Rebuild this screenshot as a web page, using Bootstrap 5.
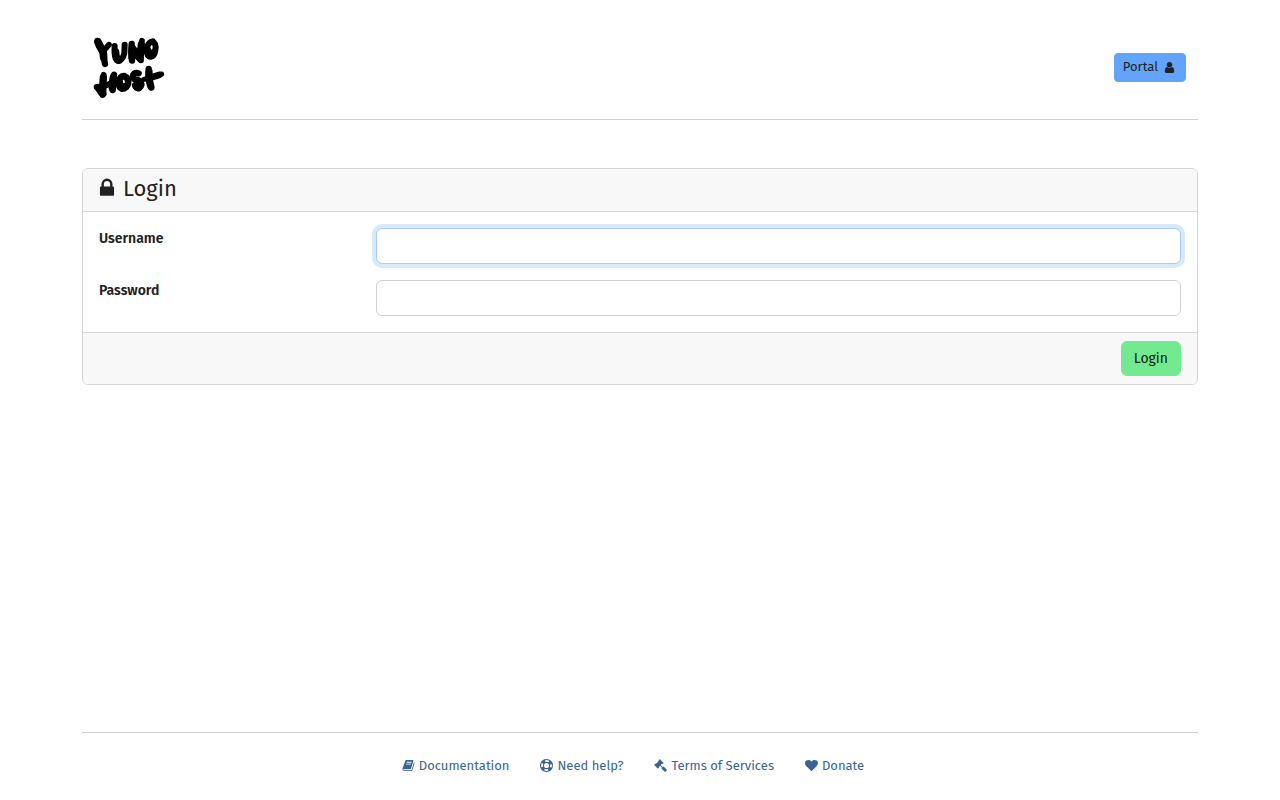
<!DOCTYPE html>
<html lang="en">
<head>
<meta charset="utf-8">
<meta name="viewport" content="width=device-width, initial-scale=1">
<title>YunoHost Portal</title>
<link href="https://cdn.jsdelivr.net/npm/bootstrap@5.3.0/dist/css/bootstrap.min.css" rel="stylesheet">
<style>
  body { font-family: "Fira Sans", "Noto Sans", sans-serif; font-size: 14px; line-height: 22px; color: #222; }
  .line { border-color: #d0d0d0 !important; }
  .fa { width: 1em; height: 1em; fill: currentColor; flex: none; }
  .site-header { padding: 32px 12px 16px; }
  .logo { width: 90px; height: 71px; margin-left: -10px; }
  .btn-portal { --bs-btn-bg: #62a4fb; --bs-btn-border-color: #62a4fb; --bs-btn-color: #222; --bs-btn-hover-bg: #4b96fa;
    font-size: 13px; line-height: 18px; padding: 4px 9px 5px 8px; border-radius: 4px; gap: 5px; }
  .btn-login { --bs-btn-bg: #72eb8e; --bs-btn-border-color: #72eb8e; --bs-btn-color: #0f1d13; --bs-btn-hover-bg: #5fdc7c;
    font-size: 14px; line-height: 21px; padding: 6px 12px; }
  .card { --bs-card-border-color: #d5d5d5; --bs-card-cap-bg: #f8f8f8; }
  .card-title { font-size: 22px; line-height: 24px; gap: 5px; padding-bottom: 2px; }
  .card-title .fa { margin: -2px 0 0 -3px; }
  .form-control { font-size: 14px; line-height: 22px; border-color: #d0d0d0; }
  .form-control.current, .form-control:focus { border-color: #a6cbfd; box-shadow: 0 0 0 4px #d8e8fe; }
  .col-form-label { font-size: 14px; line-height: 22px; padding-top: 0; padding-bottom: 0; font-weight: 600; }
  .foot-links { font-size: 13px; line-height: 20px; padding: 23px 14px 24px 0; column-gap: 31px; }
  .foot-links a { color: #3a6496; gap: 4px; }
  .foot-links .fa { margin-bottom: 1px; }
</style>
</head>
<body>
<svg class="d-none" xmlns="http://www.w3.org/2000/svg">
  <symbol id="user" viewBox="0 0 1792 1792"><path d="M1536 1399q0 109-62.5 187t-150.5 78h-854q-88 0-150.5-78t-62.5-187q0-85 8.5-160.5t31.5-152 58.5-131 94-89 134.5-34.5q131 128 313 128t313-128q76 0 134.5 34.5t94 89 58.5 131 31.5 152 8.5 160.5zm-256-887q0 159-112.5 271.5t-271.5 112.5-271.5-112.5-112.5-271.5 112.5-271.5 271.5-112.5 271.5 112.5 112.5 271.5z"/></symbol>
  <symbol id="lock" viewBox="0 0 1792 1792"><path d="M640 768h512v-192q0-106-75-181t-181-75-181 75-75 181v192zm832 96v576q0 40-28 68t-68 28h-960q-40 0-68-28t-28-68v-576q0-40 28-68t68-28h32v-192q0-184 132-316t316-132 316 132 132 316v192h32q40 0 68 28t28 68z"/></symbol>
  <symbol id="book" viewBox="0 0 1792 1792"><path d="M1703 478q40 57 18 129l-275 906q-19 64-76.5 107.5t-122.5 43.5h-923q-77 0-148.5-53.5t-99.5-131.5q-24-67-2-127 0-4 3-27t4-37q1-8-3-21.5t-3-19.5q2-11 8-21t16.5-23.5 16.5-23.5q23-38 45-91.5t30-91.5q3-10 .5-30t-.5-28q3-11 17-28t17-23q21-36 42-92t25-90q1-9-2.5-32t.5-28q4-13 22-30.5t22-22.5q19-26 42.5-84.5t27.5-96.5q1-8-3-25.5t-2-26.5q2-8 9-18t18-23 17-21q8-12 16.5-30.5t15-35 16-36 19.5-32 26.5-23.5 36-11.5 47.5 5.5l-1 3q38-9 51-9h761q74 0 114 56t18 130l-274 906q-36 119-71.5 153.5t-128.5 34.5h-869q-27 0-38 15-11 16-1 43 24 70 144 70h923q29 0 56-15.5t35-41.5l300-987q7-22 5-57 38 15 59 43zm-1064 2q-4 13 2 22.5t20 9.5h608q13 0 25.5-9.5t16.5-22.5l21-64q4-13-2-22.5t-20-9.5h-608q-13 0-25.5 9.5t-16.5 22.5zm-83 256q-4 13 2 22.5t20 9.5h608q13 0 25.5-9.5t16.5-22.5l21-64q4-13-2-22.5t-20-9.5h-608q-13 0-25.5 9.5t-16.5 22.5z"/></symbol>
  <symbol id="ring" viewBox="0 0 1792 1792"><g fill="none" stroke="currentColor"><circle cx="896" cy="896" r="820" stroke-width="150"/><circle cx="896" cy="896" r="430" stroke-width="150"/><circle cx="896" cy="896" r="640" stroke-width="480" stroke-dasharray="480 525.3" stroke-dashoffset="-262.6"/></g></symbol>
  <symbol id="gavel" viewBox="0 0 1792 1792"><path d="M1771 1536q0 53-37 90l-107 108q-39 37-91 37-53 0-90-37l-363-364q-38-36-38-90 0-53 43-96l-256-256-126 126q-14 14-34 14t-34-14q2 2 12.5 12t12.5 13 10 11.5 10 13.5 6 13.5 5.5 16.5 1.5 18q0 38-28 68-3 3-16.5 18t-19 20.5-18.5 16.5-22 15.5-22 9-26 4.5q-40 0-68-28l-408-408q-28-28-28-68 0-13 4.5-26t9-22 15.5-22 16.5-18.5 20.5-19 18-16.5q30-28 68-28 10 0 18 1.5t16.5 5.5 13.5 6 13.5 10 11.5 10 13 12.5 12 12.5q-14-14-14-34t14-34l348-348q14-14 34-14t34 14q-2-2-12.5-12t-12.5-13-10-11.5-10-13.5-6-13.5-5.5-16.5-1.5-18q0-38 28-68 3-3 16.5-18t19-20.5 18.5-16.5 22-15.5 22-9 26-4.5q40 0 68 28l408 408q28 28 28 68 0 13-4.5 26t-9 22-15.5 22-16.5 18.5-20.5 19-18 16.5q-30 28-68 28-10 0-18-1.5t-16.5-5.5-13.5-6-13.5-10-11.5-10-13-12.5-12-12.5q14 14 14 34t-14 34l-126 126 256 256q43-43 96-43 52 0 91 37l363 363q37 39 37 91z"/></symbol>
  <symbol id="heart" viewBox="0 0 1792 1792"><path d="M896 1664q-26 0-44-18l-624-602q-10-8-27.5-26t-55.5-65.5-68-97.5-53.5-121-23.5-138q0-220 127-344t351-124q62 0 126.5 21.5t120 58 95.5 68.5 76 68q36-36 76-68t95.5-68.5 120-58 126.5-21.5q224 0 351 124t127 344q0 221-229 450l-623 600q-18 18-44 18z"/></symbol>
</svg>
<div class="container min-vh-100 d-flex flex-column">
  <header class="site-header border-bottom line d-flex justify-content-between align-items-center">
    <a href="#" aria-label="YunoHost">
      <svg class="logo d-block" viewBox="0 12 270 213" fill="none" stroke="#000" stroke-linecap="round" stroke-linejoin="round">
        <path d="M40 38Q41 54 52 67Q60 68 66 60L75 50" stroke-width="17"/>
        <path d="M42 42L54 66" stroke-width="23"/>
        <path d="M58 68Q58 88 63 108" stroke-width="19"/>
        <path d="M57 66L59 88" stroke-width="23"/>
        <path d="M92 54Q89 97 103 99Q116 96 121 76L122 50" stroke-width="18"/>
        <path d="M95 72Q96 95 105 96" stroke-width="22"/>
        <path d="M144 98Q140 72 143 48" stroke-width="19"/>
        <path d="M144 88L145 60L168 92L172 50" stroke-width="22"/>
        <path d="M171 97Q169 63 174 38" stroke-width="17"/>
        <path d="M206 40C190 43 187 62 189 75C193 93 211 89 214 67C217 52 213 41 202 41" stroke-width="18"/>
        <path d="M192 68C192 84 202 88 210 72" stroke-width="20"/>
        <path d="M59 140Q53 168 56 201" stroke-width="17"/>
        <path d="M58 148L56 192" stroke-width="22"/>
        <path d="M38 177Q62 177 84 164" stroke-width="18"/>
        <path d="M44 180L56 197" stroke-width="23"/>
        <path d="M90 140Q82 158 86 186" stroke-width="19"/>
        <path d="M88 148L85 180" stroke-width="22"/>
        <path d="M120 144C102 146 100 176 114 182C134 182 140 152 122 145" stroke-width="20"/>
        <path d="M107 166Q110 182 124 176" stroke-width="22"/>
        <path d="M164 136C148 129 141 148 153 154C171 157 178 170 166 180C159 183 154 178 153 172" stroke-width="19"/>
        <path d="M162 158Q173 166 164 177" stroke-width="22"/>
        <path d="M194 123Q192 154 202 179" stroke-width="19"/>
        <path d="M195 132Q193 154 200 174" stroke-width="22"/>
        <path d="M178 155L233 138" stroke-width="15"/>
        <path d="M193 151L225 141" stroke-width="20"/>
      </svg>
    </a>
    <button type="button" class="btn btn-portal d-flex align-items-center">Portal <svg class="fa"><use href="#user"/></svg></button>
  </header>
  <main class="flex-grow-1 py-5">
    <form class="card">
      <div class="card-header">
        <h1 class="card-title fw-normal d-flex align-items-center mb-0"><svg class="fa"><use href="#lock"/></svg>Login</h1>
      </div>
      <div class="card-body">
        <div class="row mb-3">
          <label for="username" class="col-3 col-form-label">Username</label>
          <div class="col-9"><input id="username" type="text" class="form-control current" autocomplete="username"></div>
        </div>
        <div class="row">
          <label for="password" class="col-3 col-form-label">Password</label>
          <div class="col-9"><input id="password" type="password" class="form-control" autocomplete="current-password"></div>
        </div>
      </div>
      <div class="card-footer d-flex justify-content-end">
        <button type="submit" class="btn btn-login">Login</button>
      </div>
    </form>
  </main>
  <footer class="border-top line">
    <nav class="foot-links d-flex flex-wrap justify-content-center" aria-label="Footer">
      <a href="#" class="d-flex align-items-center text-decoration-none"><svg class="fa"><use href="#book"/></svg>Documentation</a>
      <a href="#" class="d-flex align-items-center text-decoration-none"><svg class="fa"><use href="#ring"/></svg>Need help?</a>
      <a href="#" class="d-flex align-items-center text-decoration-none"><svg class="fa"><use href="#gavel"/></svg>Terms of Services</a>
      <a href="#" class="d-flex align-items-center text-decoration-none"><svg class="fa"><use href="#heart"/></svg>Donate</a>
    </nav>
  </footer>
</div>
<script src="https://cdn.jsdelivr.net/npm/bootstrap@5.3.0/dist/js/bootstrap.bundle.min.js"></script>
</body>
</html>
